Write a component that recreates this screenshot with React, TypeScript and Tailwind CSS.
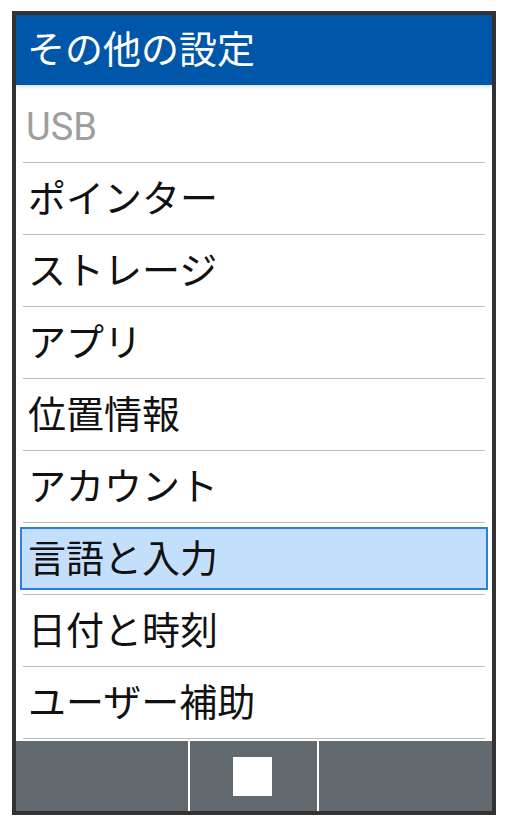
import React from "react";

const items = [
  { label: "USB", disabled: true },
  { label: "ポインター" },
  { label: "ストレージ" },
  { label: "アプリ" },
  { label: "位置情報" },
  { label: "アカウント" },
  { label: "言語と入力", selected: true },
  { label: "日付と時刻" },
  { label: "ユーザー補助" },
];

const App = () => {
  return (
    <div
      className="w-[507px] h-[826px] bg-white pt-[11px] pl-[12px]"
      style={{ fontFamily: "Roboto, 'Noto Sans CJK JP', sans-serif" }}
    >
      <div className="w-[484px] h-[804px] border-4 border-[#333333] flex flex-col bg-white">
        <div className="h-[70px] shrink-0 bg-[#0056a9] flex items-center pl-[11px] text-white text-[38px] leading-none shadow-[0_2px_4px_rgba(0,0,0,0.12)] relative z-10">
          その他の設定
        </div>
        <div className="pt-[6px] flex flex-col">
          {items.map((it) => (
            <div key={it.label} className="flex flex-col">
              <div className="h-[71px] flex items-center px-[4px]">
                <div
                  className={
                    it.selected
                      ? "w-full h-[63px] flex items-center pl-[6px] bg-[#c4dffb] border-2 border-[#2f7fd8] text-[#111111] text-[38px] leading-none"
                      : it.disabled
                      ? "w-full h-[63px] flex items-center pl-[6px] text-[#9e9e9e] text-[38px] leading-none"
                      : "w-full h-[63px] flex items-center pl-[8px] text-[#111111] text-[38px] leading-none"
                  }
                >
                  {it.label}
                </div>
              </div>
              <div className="mx-[7px] h-px bg-[#b9bcbd]" />
            </div>
          ))}
        </div>
        <div className="h-[2px]" />
        <div className="h-[70px] flex bg-[#626a70]">
          <div className="w-[174px] border-r-2 border-white" />
          <div className="w-[129px] border-r-2 border-white flex items-center justify-center pr-[2px]">
            <div className="w-[39px] h-[39px] bg-white" />
          </div>
          <div className="flex-1" />
        </div>
      </div>
    </div>
  );
};

export default App;
